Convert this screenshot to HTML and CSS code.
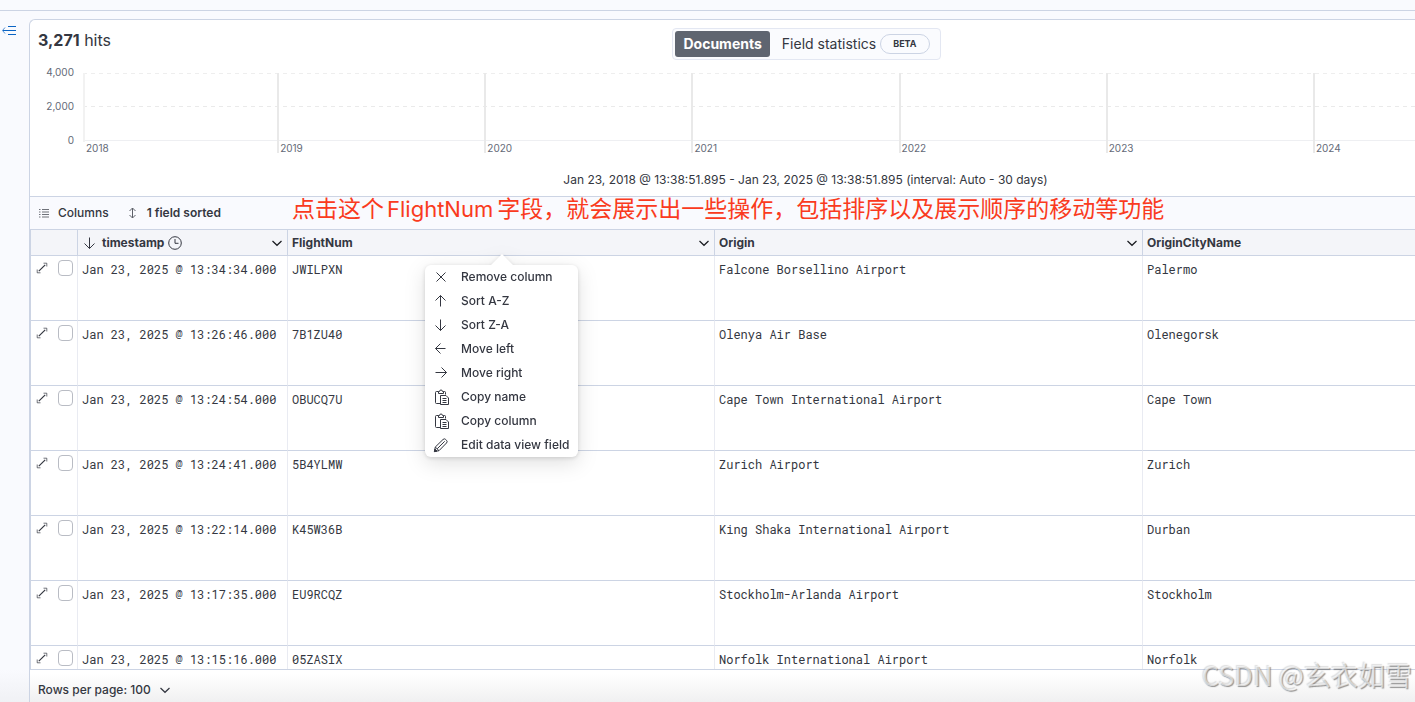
FILE: index.html
```html
<!DOCTYPE html>
<html lang="zh-CN">
<head>
<meta charset="utf-8">
<title>Discover</title>
<link rel="stylesheet" href="styles.css">
</head>
<body>
<svg class="sprite" aria-hidden="true">
  <symbol id="i-expand" viewBox="0 0 12 12"><path d="M2.800 9.200 9.200 2.800" stroke-width="1.200"/><path d="M7.500 1.200h3.300v3.300M1.200 7.500v3.300h3.300" stroke-width=".7"/></symbol>
  <symbol id="i-chevron" viewBox="0 0 12 12"><path d="M1.500 4 6 8.300 10.500 4" stroke-width="1.200"/></symbol>
  <symbol id="i-down" viewBox="0 0 16 16"><path d="M7.500 2.500v11M2.500 8.500l5 5 5-5"/></symbol>
  <symbol id="i-up" viewBox="0 0 16 16"><path d="M7.500 13.500v-11M2.500 7.500l5-5 5 5"/></symbol>
  <symbol id="i-left" viewBox="0 0 16 16"><path d="M12.500 7.500h-10M7.500 2.500l-5 5 5 5"/></symbol>
  <symbol id="i-right" viewBox="0 0 16 16"><path d="M2.500 7.500h11M8.500 2.500l5 5-5 5"/></symbol>
  <symbol id="i-cross" viewBox="0 0 16 16"><path d="M3.500 3.500l9 9M12.500 3.500l-9 9"/></symbol>
  <symbol id="i-clip" viewBox="0 0 16 16"><path d="M7 14.500H3.500a1 1 0 0 1-1-1v-10a1 1 0 0 1 1-1h2M10.500 2.500h1a1 1 0 0 1 1 1v2M5.500 4.500v-2h1a1.500 1.500 0 0 1 3 0h1v2zM7.500 6.500h5.500l2.500 2.500v6.500h-8zM9.500 9.500h4M9.500 11.500h4M9.500 13.500h4"/></symbol>
  <symbol id="i-pencil" viewBox="0 0 16 16"><path d="M1.500 14.500l.8-4.500 7.700-7.500a1.900 1.900 0 0 1 2.700 0l.8.8a1.900 1.900 0 0 1 0 2.700l-7.500 7.700zM2.300 10l3.700 3.700M4.200 11.800 11.700 4.300"/><path d="M1.300 14.700l.6-2.700 2.100 2.100z" fill="currentColor"/></symbol>
</svg>
<div class="app">
  <div class="topbar"></div>
  <div class="workspace">
    <aside class="sidebar">
      <button class="bare toggle" aria-label="Show sidebar">
        <svg class="icon" width="16" height="12" viewBox="0 0 16 12"><path d="M7 1.500h8M2 5.500h13M7 9.500h8"/><path d="M4 2.500 1.500 5.500 4 8.500" stroke-width=".7"/></svg>
      </button>
    </aside>
    <main class="panel">
      <header class="summary">
        <p class="hits"><strong>3,271</strong> hits</p>
        <div class="tabs" role="tablist">
          <button class="tab tab-active" role="tab" aria-selected="true">Documents</button>
          <button class="tab" role="tab" aria-selected="false">Field statistics <span class="beta">BETA</span></button>
        </div>
      </header>
      <section class="chart" aria-label="Histogram">
        <div class="y-axis"><span>4,000</span><span>2,000</span><span>0</span></div>
        <div class="plot">
          <div class="year">2018</div><div class="year">2019</div><div class="year">2020</div><div class="year">2021</div><div class="year">2022</div><div class="year">2023</div><div class="year">2024</div>
        </div>
      </section>
      <p class="range">Jan 23, 2018 @ 13:38:51.895 - Jan 23, 2025 @ 13:38:51.895 (interval: Auto - 30 days)</p>
      <div class="toolbar">
        <button class="bare tool"><svg class="icon" width="12" height="12" viewBox="0 0 12 12"><path d="M1 2.500h1.500M4 2.500h7M1 5h1.500M4 5h7M1 7.500h1.500M4 7.500h7M1 10h1.500M4 10h7" stroke-width=".7"/></svg>Columns</button>
        <button class="bare tool tool-strong"><svg class="icon" width="12" height="12" viewBox="0 0 12 12"><path d="M5.500 1.500v9M2.500 4l3-3 3 3M2.500 8l3 3 3-3" stroke-width=".8"/></svg>1 field sorted</button>
        <p class="note">点击这个<span class="note-field">FlightNum</span>字段，就会展示出一些操作，包括排序以及展示顺序的移动等功能</p>
      </div>
      <div class="grid-area">
        <table class="grid">
          <colgroup><col class="c-ctl"><col class="c-time"><col class="c-num"><col class="c-origin"><col></colgroup>
          <thead>
            <tr>
              <th></th>
              <th><div class="head"><svg class="icon" width="16" height="16"><use href="#i-down"/></svg><span>timestamp</span><svg class="icon clock" width="14" height="14" viewBox="0 0 14 14"><circle cx="7" cy="7" r="6.300"/><path d="M7 3v4.300h3.500"/></svg><button class="bare more" aria-label="timestamp actions"><svg class="icon" width="12" height="12"><use href="#i-chevron"/></svg></button></div></th>
              <th class="anchor"><div class="head"><span>FlightNum</span><button class="bare more" aria-label="FlightNum actions"><svg class="icon" width="12" height="12"><use href="#i-chevron"/></svg></button></div>
                <div class="popover">
                  <ul class="menu">
                    <li><button class="bare item"><svg class="icon" width="16" height="16"><use href="#i-cross"/></svg>Remove column</button></li>
                    <li><button class="bare item"><svg class="icon" width="16" height="16"><use href="#i-up"/></svg>Sort A-Z</button></li>
                    <li><button class="bare item"><svg class="icon" width="16" height="16"><use href="#i-down"/></svg>Sort Z-A</button></li>
                    <li><button class="bare item"><svg class="icon" width="16" height="16"><use href="#i-left"/></svg>Move left</button></li>
                    <li><button class="bare item"><svg class="icon" width="16" height="16"><use href="#i-right"/></svg>Move right</button></li>
                    <li><button class="bare item"><svg class="icon" width="16" height="16"><use href="#i-clip"/></svg>Copy name</button></li>
                    <li><button class="bare item"><svg class="icon" width="16" height="16"><use href="#i-clip"/></svg>Copy column</button></li>
                    <li><button class="bare item"><svg class="icon" width="16" height="16"><use href="#i-pencil"/></svg>Edit data view field</button></li>
                  </ul>
                </div>
              </th>
              <th><div class="head"><span>Origin</span><button class="bare more" aria-label="Origin actions"><svg class="icon" width="12" height="12"><use href="#i-chevron"/></svg></button></div></th>
              <th><div class="head"><span>OriginCityName</span></div></th>
            </tr>
          </thead>
          <tbody>
            <tr><td><div class="ctl"><button class="bare" aria-label="Expand row 1"><svg class="icon" width="12" height="12"><use href="#i-expand"/></svg></button><input type="checkbox" aria-label="Select row 1"></div></td><td>Jan 23, 2025 @ 13:34:34.000</td><td>JWILPXN</td><td>Falcone Borsellino Airport</td><td>Palermo</td></tr>
            <tr><td><div class="ctl"><button class="bare" aria-label="Expand row 2"><svg class="icon" width="12" height="12"><use href="#i-expand"/></svg></button><input type="checkbox" aria-label="Select row 2"></div></td><td>Jan 23, 2025 @ 13:26:46.000</td><td>7B1ZU40</td><td>Olenya Air Base</td><td>Olenegorsk</td></tr>
            <tr><td><div class="ctl"><button class="bare" aria-label="Expand row 3"><svg class="icon" width="12" height="12"><use href="#i-expand"/></svg></button><input type="checkbox" aria-label="Select row 3"></div></td><td>Jan 23, 2025 @ 13:24:54.000</td><td>OBUCQ7U</td><td>Cape Town International Airport</td><td>Cape Town</td></tr>
            <tr><td><div class="ctl"><button class="bare" aria-label="Expand row 4"><svg class="icon" width="12" height="12"><use href="#i-expand"/></svg></button><input type="checkbox" aria-label="Select row 4"></div></td><td>Jan 23, 2025 @ 13:24:41.000</td><td>5B4YLMW</td><td>Zurich Airport</td><td>Zurich</td></tr>
            <tr><td><div class="ctl"><button class="bare" aria-label="Expand row 5"><svg class="icon" width="12" height="12"><use href="#i-expand"/></svg></button><input type="checkbox" aria-label="Select row 5"></div></td><td>Jan 23, 2025 @ 13:22:14.000</td><td>K45W36B</td><td>King Shaka International Airport</td><td>Durban</td></tr>
            <tr><td><div class="ctl"><button class="bare" aria-label="Expand row 6"><svg class="icon" width="12" height="12"><use href="#i-expand"/></svg></button><input type="checkbox" aria-label="Select row 6"></div></td><td>Jan 23, 2025 @ 13:17:35.000</td><td>EU9RCQZ</td><td>Stockholm-Arlanda Airport</td><td>Stockholm</td></tr>
            <tr><td><div class="ctl"><button class="bare" aria-label="Expand row 7"><svg class="icon" width="12" height="12"><use href="#i-expand"/></svg></button><input type="checkbox" aria-label="Select row 7"></div></td><td>Jan 23, 2025 @ 13:15:16.000</td><td>05ZASIX</td><td>Norfolk International Airport</td><td>Norfolk</td></tr>
          </tbody>
        </table>
      </div>
      <footer class="pager">
        <button class="bare tool">Rows per page: 100<svg class="icon" width="12" height="12"><use href="#i-chevron"/></svg></button>
      </footer>
    </main>
  </div>
  <div class="watermark">CSDN @玄衣如雪</div>
</div>
</body>
</html>
```
FILE: styles.css
```css
* { box-sizing: border-box; }

body {
  margin: 0;
  background: #f9fafe;
  color: #343741;
  font: 12px/24px Inter, "Noto Sans CJK SC", sans-serif;
}

p, ul { margin: 0; padding: 0; }

.sprite { position: absolute; width: 0; height: 0; }

.icon {
  display: block;
  flex: none;
  fill: none;
  stroke: currentColor;
  stroke-width: 1;
}

.bare {
  display: flex;
  align-items: center;
  padding: 0;
  border: 0;
  background: none;
  color: inherit;
  font: inherit;
}

.app {
  position: relative;
  display: flex;
  flex-direction: column;
  height: 100vh;
  overflow: hidden;
}

.topbar { flex: none; height: 11px; border-bottom: 1px solid #ccd4e4; }

.workspace { display: flex; flex: 1; min-height: 0; padding-top: 8px; }

.sidebar {
  flex: none;
  width: 29px;
  padding: 6px 1px;
  background: linear-gradient(to top, #f0f1f5, #f9fafe 32px);
}

.toggle { color: #0b64c4; }

.panel {
  display: flex;
  flex: 1;
  flex-direction: column;
  min-width: 0;
  border: 1px solid #ccd4e4;
  border-width: 1px 0 0 1px;
  border-radius: 6px 0 0 0;
  background: #fff;
}

.summary { display: grid; flex: none; padding: 8px 0 0 8px; }
.summary > * { grid-area: 1 / 1; }

.hits { justify-self: start; font-size: 16px; }

.tabs {
  display: flex;
  justify-self: center;
  height: 32px;
  margin-left: 160px;
  padding: 2px;
  border: 1px solid #e3e7f2;
  border-radius: 4px;
  background: #fafbfe;
}

.tab {
  display: flex;
  align-items: center;
  gap: 4px;
  padding: 0 8px 0 12px;
  border: 0;
  border-radius: 3px;
  background: none;
  color: #343741;
  font: 14px/20px Inter, sans-serif;
}

.tab-active { padding: 0 8px; background: #5f6570; color: #fff; font-weight: 700; }

.beta {
  padding: 0 12px;
  border: 1px solid #ccd4e4;
  border-radius: 10px;
  font-size: 9px;
  font-weight: 700;
  line-height: 18px;
}

.chart {
  display: flex;
  flex: none;
  height: 92px;
  padding-top: 13px;
  color: #646a77;
  font-size: 10px;
  line-height: 12px;
}

.y-axis {
  display: flex;
  flex-direction: column;
  justify-content: space-between;
  flex: none;
  width: 53px;
  height: 80px;
  margin-top: -7px;
  padding-right: 9px;
  text-align: right;
}

.plot {
  display: grid;
  grid-template-columns: 194fr 207fr 207fr 207fr 207fr 207fr 102fr;
  flex: 1;
  height: 80px;
  line-height: 10px;
  background:
    repeating-linear-gradient(90deg, #eee 0 4px, transparent 4px 8px) 0 0 / 100% 1px no-repeat,
    repeating-linear-gradient(90deg, #eaeaea 0 4px, transparent 4px 8px) 0 33px / 100% 1px no-repeat,
    linear-gradient(#eeeff2, #eeeff2) 0 67px / 100% 1px no-repeat;
}

.year { padding: 70px 0 0 1px; border-left: 2px solid #e9e9e9; }
.year:first-child { border-image: linear-gradient(#f2f2f2 68px, transparent 68px) 1; }

.range { flex: none; height: 44px; padding: 16px 0 0 166px; text-align: center; }

.toolbar {
  position: relative;
  display: flex;
  gap: 18px;
  flex: none;
  height: 33px;
  padding-left: 8px;
  border-top: 1px solid #ccd4e4;
  background: #f9fafe;
}

.tool { gap: 8px; font-weight: 500; }
.tool-strong { font-weight: 600; }

.note {
  position: absolute;
  top: 0;
  left: 262px;
  color: #fa3a20;
  font-size: 23px;
  line-height: 24px;
  white-space: nowrap;
}

.note-field { margin: 0 4px 0 3px; font-size: 22px; }

.grid-area {
  flex: 1;
  min-height: 0;
  overflow: hidden;
  border: 1px solid #ccd4e4;
  border-right: 0;
}

.grid { width: 100%; table-layout: fixed; border-collapse: separate; border-spacing: 0; }
.c-ctl { width: 47px; }
.c-time { width: 210px; }
.c-num { width: 427px; }
.c-origin { width: 428px; }

.grid th {
  height: 26px;
  padding: 0 4px;
  border-right: 1px solid #ccd4e4;
  border-bottom: 1px solid #ccd4e4;
  background: #f4f5f9;
  font-weight: 700;
  text-align: left;
}

.head { display: flex; align-items: center; gap: 4px; height: 25px; }
.more { margin-left: auto; color: #1a1c21; }

.grid td {
  height: 65px;
  padding: 4px;
  border-right: 1px solid #e9ebf2;
  border-bottom: 1px solid #ccd4e4;
  font: 12px/18px "Roboto Mono", "Liberation Mono", monospace;
  vertical-align: top;
  white-space: nowrap;
}

.grid th:last-child, .grid td:last-child { border-right: 0; }

.ctl { display: flex; align-items: center; gap: 10px; height: 16px; padding-left: 1px; }

.ctl input {
  appearance: none;
  width: 16px;
  height: 16px;
  margin: 0;
  border: 1px solid #b9bcc4;
  border-radius: 4px;
  background: #fff;
}

.anchor { position: relative; }

.popover {
  position: absolute;
  z-index: 2;
  top: 35px;
  left: calc(50% - 76px);
  width: 153px;
  border-radius: 6px;
  background: #fff;
  filter: drop-shadow(0 1px 2px rgba(0, 0, 0, .14)) drop-shadow(0 6px 10px rgba(0, 0, 0, .12));
}

.popover::before {
  content: "";
  position: absolute;
  top: -11px;
  left: calc(50% - 11px);
  border: 11px solid transparent;
  border-top: 0;
  border-bottom-color: #fff;
}

.menu { list-style: none; }
.item { gap: 12px; width: 100%; height: 24px; padding-left: 8px; font-weight: 500; white-space: nowrap; }

.pager {
  display: flex;
  flex: none;
  height: 32px;
  padding: 4px 0 0 8px;
  align-items: start;
  background: linear-gradient(#fff 4px, #f0f0f1);
}

.pager .tool { height: 32px; }

.watermark {
  position: absolute;
  right: 3px;
  bottom: 7px;
  color: rgba(255, 255, 255, .6);
  font: 27px/40px "Noto Sans CJK SC", sans-serif;
  text-shadow: 1px 1px 1px rgba(90, 90, 90, .65), -1px -1px 1px rgba(130, 130, 130, .25);
}
```
